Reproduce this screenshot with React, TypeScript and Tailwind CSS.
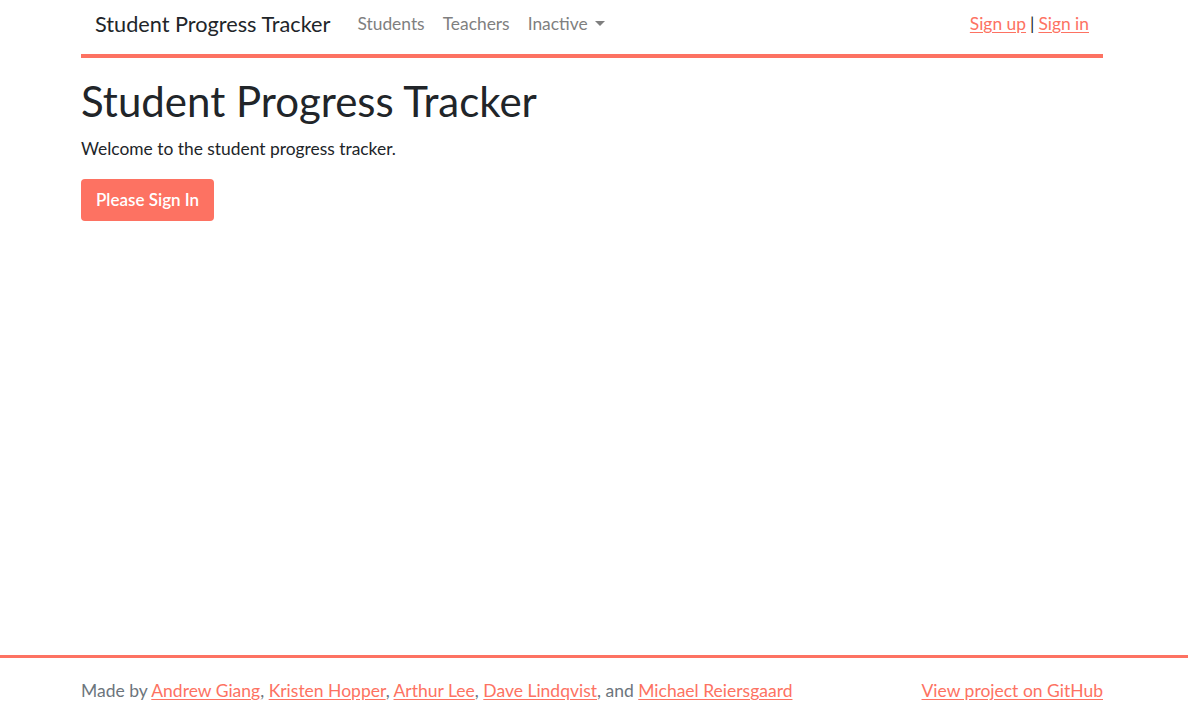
const coral = "text-[#fd7262]";

function Caret() {
  return (
    <span className="ml-[7px] inline-block h-0 w-0 border-x-[5px] border-t-[5px] border-x-transparent border-t-[#7f7f7f] align-[3px]" />
  );
}

export default function App() {
  return (
    <div className="flex min-h-[721px] flex-col bg-white font-['Lato','Open_Sans',sans-serif] text-[#212529]">
      <div className="ml-[81px] mr-[85px]">
        <nav className="flex h-[58px] items-center justify-between border-b-4 border-[#fd7262] px-[14px] pb-[6px]">
          <div className="flex items-center">
            <a className="mr-[27px] text-[21.7px] text-[#212529]">Student Progress Tracker</a>
            <ul className="flex items-center gap-[18px] text-[17.4px] text-[#7f7f7f]">
              <li>Students</li>
              <li>Teachers</li>
              <li className="flex items-center">
                Inactive
                <Caret />
              </li>
            </ul>
          </div>
          <div className="text-[17.4px]">
            <a className={`${coral} underline underline-offset-2`}>Sign up</a>
            <span className="mx-[4px]">|</span>
            <a className={`${coral} underline underline-offset-2`}>Sign in</a>
          </div>
        </nav>

        <main className="pt-[18px]">
          <h1 className="text-[42px] leading-[1.2]">Student Progress Tracker</h1>
          <p className="mt-[10px] text-[17.4px]">Welcome to the student progress tracker.</p>
          <button className="mt-[16px] h-[42px] rounded-[4px] bg-[#fd7262] px-[15px] text-[17px] font-semibold text-white">
            Please Sign In
          </button>
        </main>
      </div>

      <footer className="mt-auto border-t-[3px] border-[#fd7262]">
        <div className="ml-[81px] mr-[85px] flex h-[63px] items-center justify-between pt-[3px] text-[17.5px] text-[#6c757d]">
          <p>
            Made by{" "}
            <a className={`${coral} underline underline-offset-2`}>Andrew Giang</a>,{" "}
            <a className={`${coral} underline underline-offset-2`}>Kristen Hopper</a>,{" "}
            <a className={`${coral} underline underline-offset-2`}>Arthur Lee</a>,{" "}
            <a className={`${coral} underline underline-offset-2`}>Dave Lindqvist</a>, and{" "}
            <a className={`${coral} underline underline-offset-2`}>Michael Reiersgaard</a>
          </p>
          <a className={`${coral} underline underline-offset-2`}>View project on GitHub</a>
        </div>
      </footer>
    </div>
  );
}
